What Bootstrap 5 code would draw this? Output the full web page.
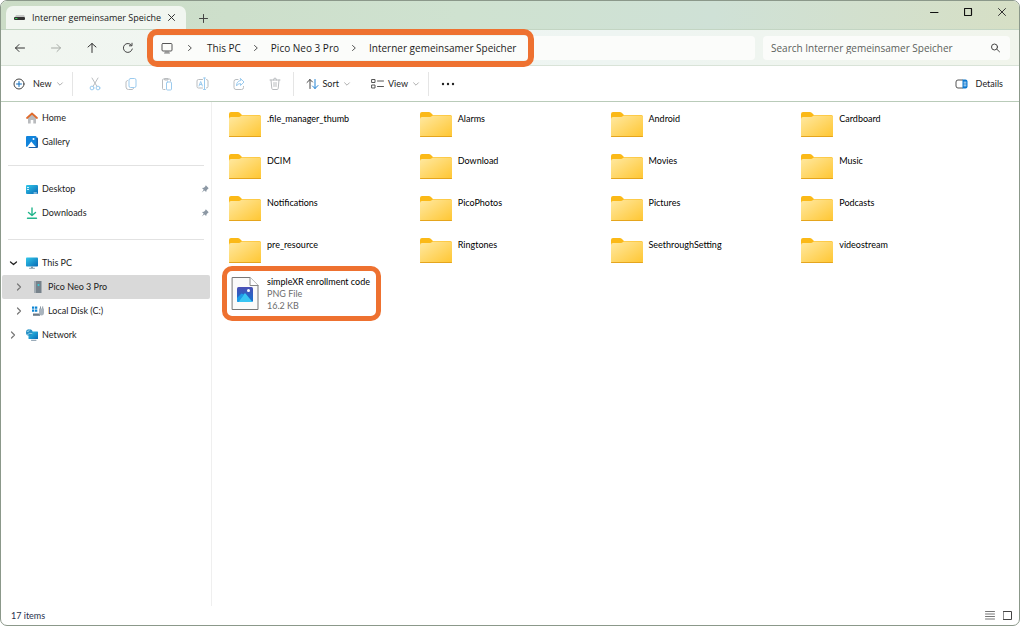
<!DOCTYPE html>
<html lang="en">
<head>
<meta charset="utf-8">
<meta name="viewport" content="width=device-width, initial-scale=1">
<title>Interner gemeinsamer Speicher</title>
<link href="https://cdn.jsdelivr.net/npm/bootstrap@5.3.0/dist/css/bootstrap.min.css" rel="stylesheet">
<style>
:root { --accent: #ee7130; --ink: #1b1b1b; --rule: #e5e5e5; }
body { font-family: Lato, "Open Sans", sans-serif; font-size: 9px; line-height: 12px; color: var(--ink); background: #fff; }
button, input { font: inherit; color: inherit; }
svg { display: block; flex: none; fill: none; stroke-linecap: round; stroke-linejoin: round; }
a { color: inherit; text-decoration: none; }
.plain { border: 0; background: none; padding: 0; display: flex; align-items: center; justify-content: center; }
.window { border: 1px solid #8b988a; border-radius: 7px; }
.titlebar { height: 28px; background: linear-gradient(90deg, #cbdcc6, #cfe2d0 45%, #cfe1d6 70%, #d6dfc5); }
.tab-page { width: 180px; margin: 5px 0 0 5px; padding: 0 10px 0 8px; background: #f1f6f0; border-radius: 7px 7px 0 0; }
.tab-title, .field-box { font-family: "Open Sans", "Noto Sans", sans-serif; }
.tab-title { margin-left: 6px; white-space: nowrap; }
.caption-btn { width: 34px; height: 22px; }
.navbar-row { height: 37px; padding: 0 9px 0 1px; background: linear-gradient(90deg, #f1f6f0, #eef5f2 60%, #f1f5ec); border-top: 1px solid #c3d5c3; border-bottom: 1px solid #d9e3d8; }
.nav-btn { width: 36px; height: 24px; }
.field-box { height: 24px; border-radius: 4px; background: #fbfcfa; font-size: 10px; }
.address { margin: 0 4px 0 7px; }
.search-box { width: 247px; }
.search-box input { border: 0; outline: 0; background: none; padding: 0; }
.search-box input::placeholder { color: #5c5f5c; opacity: 1; }
.crumbs { width: 375px; height: 24px; }
.marked { position: relative; }
.marked::after { content: ""; position: absolute; border: 6px solid var(--accent); border-radius: 10px; pointer-events: none; }
.crumbs::after { inset: -7px -6px; }
.toolbar { height: 36px; border-bottom: 1px solid #b9cbb9; }
.tool-icon { width: 36px; height: 24px; }
.split { width: 1px; height: 24px; background: var(--rule); }
.side { width: 211px; padding-top: 4px; border-right: 1px solid #efefef; }
.side-row { height: 24px; padding-left: 5px; margin: 0 1px; border-radius: 2px; display: flex; align-items: center; }
.side-row.nested { padding-left: 11px; }
.side-row.chosen { background: #d9d9d9; }
.side-row .twist { width: 12px; height: 12px; margin-right: 7px; }
.side-row svg.kind { margin-right: 4px; }
.side-line { height: 1px; margin: 11px 7px; background: #e2e2e2; }
.side-line.lower { margin-top: 14px; }
.tiles { display: grid; grid-template-columns: repeat(4, 1fr); grid-auto-rows: 42px; padding: 5px 27px 0 17px; color: #000; }
.tile { display: flex; align-items: flex-start; gap: 6px; white-space: nowrap; }
.tile > svg { margin-top: 5px; }
.tile > span { padding-top: 6px; }
.tile.picture > svg { margin-top: 2px; }
.tile.picture > span { padding-top: 1px; }
.tile.picture::after { top: -9px; left: -7px; width: 159px; height: 55px; border-width: 5px; }
.muted-line { color: #6d6d6d; }
.statusbar { height: 19px; padding: 0 7px 0 10px; color: #27314d; }
</style>
</head>
<body>
<svg width="0" height="0" class="position-absolute" aria-hidden="true">
  <defs>
    <linearGradient id="gFolder" x1="0" y1="0" x2="1" y2="1"><stop stop-color="#ffe9a2"/><stop offset="1" stop-color="#ffc631"/></linearGradient>
    <linearGradient id="gBlue" x1="0" y1="0" x2="1" y2="1"><stop stop-color="#31c8ea"/><stop offset="1" stop-color="#0869b5"/></linearGradient>
    <linearGradient id="gPic" x1="0" y1="0" x2="0" y2="1"><stop stop-color="#4b4fb5"/><stop offset="1" stop-color="#1272d0"/></linearGradient>
  </defs>
  <symbol id="folder" viewBox="0 0 32 26"><path d="M0 6V2Q0 0 2 0H9Q10.500 0 11.500 1.500L13 3H30Q32 3 32 5V10H0Z" fill="#fbb917"/><path d="M0 7Q0 5 2 5H10Q11 5 12 4L13 3.500H30Q32 3.500 32 5V23.500Q32 25 30.500 25H1.500Q0 25 0 23.500Z" fill="url(#gFolder)"/><path d="M.5 24.500H31.500" stroke="#e5a51d"/></symbol>
  <symbol id="right" viewBox="0 0 10 10"><path d="M3.500 2.500L6.300 5L3.500 7.500" stroke="#555"/></symbol>
  <symbol id="down" viewBox="0 0 10 10"><path d="M2 3.500L5 6.500L8 3.500" stroke="currentColor" stroke-width="1.200"/></symbol>
  <symbol id="pin" viewBox="0 0 8 8"><path d="M4.800 .3L7.700 3.200L6.700 4L5.500 5.400L5.200 7L3.400 5.500L.7 7.600L2.700 4.800L1 3L2.900 2.700L4.200 1.400Z" fill="#8c98a4"/></symbol>
</svg>

<div class="window d-flex flex-column min-vh-100 overflow-hidden">
  <header class="titlebar d-flex">
    <div class="tab-page d-flex align-items-center">
      <svg width="12" height="6" viewBox="0 0 12 6"><path d="M1 2L2 0H10L11 2Z" fill="#c6c8c6"/><rect x="0" y="2" width="11" height="3" rx="1" fill="#333"/><path d="M1.500 3.500H3" stroke="#39d353"/></svg>
      <span class="tab-title">Interner gemeinsamer Speiche</span>
      <button class="plain ms-auto" aria-label="Close tab"><svg width="9" height="9" viewBox="0 0 9 9"><path d="M1.500 1.500L7.500 7.500M7.500 1.500L1.500 7.500" stroke="#333"/></svg></button>
    </div>
    <button class="plain caption-btn mt-1 pt-1" aria-label="New tab"><svg width="9" height="9" viewBox="0 0 9 9"><path d="M4.500 .5V8.500M.5 4.500H8.500" stroke="#444"/></svg></button>
    <div class="d-flex ms-auto">
      <button class="plain caption-btn" aria-label="Minimize"><svg width="9" height="9" viewBox="0 0 9 9"><path d="M.5 4.500H8" stroke="#111"/></svg></button>
      <button class="plain caption-btn" aria-label="Maximize"><svg width="9" height="9" viewBox="0 0 9 9"><rect x=".5" y=".5" width="7" height="7" rx=".5" stroke="#111" stroke-width="1.200"/></svg></button>
      <button class="plain caption-btn" aria-label="Close"><svg width="9" height="9" viewBox="0 0 9 9"><path d="M.5 .5L7.500 7.500M7.500 .5L.5 7.500" stroke="#333"/></svg></button>
    </div>
  </header>

  <div class="navbar-row d-flex align-items-center">
    <button class="plain nav-btn" aria-label="Back"><svg width="12" height="12" viewBox="0 0 12 12"><path d="M10.500 6H1.500M5 2.500L1.500 6L5 9.500" stroke="#333"/></svg></button>
    <button class="plain nav-btn" aria-label="Forward"><svg width="12" height="12" viewBox="0 0 12 12"><path d="M1.500 6H10.500M7 2.500L10.500 6L7 9.500" stroke="#a5aaa5"/></svg></button>
    <button class="plain nav-btn" aria-label="Up"><svg width="12" height="12" viewBox="0 0 12 12"><path d="M6 10.500V1.500M2 5L6 1.500L10 5" stroke="#333"/></svg></button>
    <button class="plain nav-btn" aria-label="Refresh"><svg width="12" height="12" viewBox="0 0 12 12"><path d="M10.300 7A4.500 4.500 0 1 1 9.500 3.200M10 1.200V3.800H7.400" stroke="#444"/></svg></button>
    <div class="field-box address flex-grow-1">
      <nav class="crumbs marked d-flex align-items-center" aria-label="Address">
        <svg class="ms-2" width="12" height="12" viewBox="0 0 12 12"><rect x="1" y="1.500" width="10" height="7.500" rx="1" stroke="#555"/><path d="M3.500 11H8.500M5 9.500V10.500M7 9.500V10.500" stroke="#777"/></svg>
        <svg class="mx-2 ps-1" width="14" height="10"><use href="#right"/></svg>
        <a class="ms-1" href="#">This PC</a>
        <svg class="mx-2" width="14" height="10"><use href="#right"/></svg>
        <a href="#">Pico Neo 3 Pro</a>
        <svg class="mx-2" width="14" height="10"><use href="#right"/></svg>
        <a href="#">Interner gemeinsamer Speicher</a>
      </nav>
    </div>
    <div class="field-box search-box d-flex align-items-center ms-1">
      <input class="flex-grow-1 ms-2" type="text" aria-label="Search" placeholder="Search Interner gemeinsamer Speicher">
      <svg class="me-2" width="12" height="10" viewBox="0 0 12 10"><circle cx="4.500" cy="4" r="3" stroke="#444"/><path d="M6.800 6.200L9.500 8.800" stroke="#444"/></svg>
    </div>
  </div>

  <div class="toolbar d-flex align-items-center">
    <button class="plain ms-2 ps-1"><svg width="12" height="12" viewBox="0 0 12 12"><circle cx="6" cy="6" r="5" stroke="#444"/><path d="M6 3.500V8.500M3.500 6H8.500" stroke="#0f6cbd"/></svg><span class="mx-1 ps-1">New</span><svg width="8" height="8" color="#aaa"><use href="#down"/></svg></button>
    <span class="split ms-2 me-1"></span>
    <button class="plain tool-icon" aria-label="Cut" disabled><svg width="12" height="14" viewBox="0 0 12 14"><path d="M3 1L8 9.500M9 1L4 9.500" stroke="#b9bcbf"/><circle cx="3" cy="11" r="1.900" stroke="#9ccbee"/><circle cx="9" cy="11" r="1.900" stroke="#9ccbee"/></svg></button>
    <button class="plain tool-icon" aria-label="Copy" disabled><svg width="12" height="14" viewBox="0 0 12 14"><rect x="4" y="1.500" width="7" height="9" rx="1.500" stroke="#9ccbee"/><path d="M2.500 3.500Q1 4 1 5V10Q1 12.500 3.500 12.500H7Q8 12.500 8.500 11.500" stroke="#b9bcbf"/></svg></button>
    <button class="plain tool-icon" aria-label="Paste" disabled><svg width="12" height="14" viewBox="0 0 12 14"><path d="M4 12.500H2.500Q1.500 12.500 1.500 11.500V3Q1.500 2 2.500 2H8.500Q9.500 2 9.500 3V4" stroke="#b9bcbf"/><path d="M4 1.500H7V3H4Z" stroke="#b9bcbf"/><rect x="5.500" y="5" width="5" height="8" rx="1" stroke="#9ccbee"/></svg></button>
    <button class="plain tool-icon" aria-label="Rename" disabled><svg width="13" height="14" viewBox="0 0 13 14"><path d="M6.500 2.500H2.500Q1 2.500 1 4V9.500Q1 11 2.500 11H6.500M10.500 2.500Q12 2.500 12 4V9.500Q12 11 10.500 11" stroke="#b9bcbf"/><path d="M7.500 1H9.500M8.500 1V12.500M7.500 12.500H9.500M3 9L4.700 4.500L6.400 9M3.600 7.500H5.800" stroke="#9ccbee"/></svg></button>
    <button class="plain tool-icon" aria-label="Share" disabled><svg width="12" height="14" viewBox="0 0 12 14"><path d="M5 2.500H3Q1 2.500 1 4.500V10.500Q1 12.500 3 12.500H8.500Q10.500 12.500 10.500 10.500V9.500" stroke="#b9bcbf"/><path d="M7.500 1.500L11 5L7.500 8.500V6.500Q4.500 6.500 3.500 9Q3.500 4 7.500 3.500Z" stroke="#9ccbee"/></svg></button>
    <button class="plain tool-icon" aria-label="Delete" disabled><svg width="12" height="14" viewBox="0 0 12 14"><path d="M1 3H11M4.500 3Q4.500 1 6 1T7.500 3M2 3L2.800 11.500Q3 12.500 4 12.500H8Q9 12.500 9.200 11.500L10 3M5 5.500V9.500M7 5.500V9.500" stroke="#b9bcbf"/></svg></button>
    <span class="split"></span>
    <button class="plain ms-2 ps-1"><svg width="13" height="12" viewBox="0 0 13 12"><path d="M4 10.500V1.500M1 4.500L4 1.500L6.500 4" stroke="#444"/><path d="M9 1.500V10.500M6.500 8L9 10.500L12 7.500" stroke="#2082d4"/></svg><span class="mx-1">Sort</span><svg width="8" height="8" color="#aaa"><use href="#down"/></svg></button>
    <button class="plain ms-3 ps-1"><svg width="13" height="12" viewBox="0 0 13 12"><path d="M1 1.500H4V4.500H1ZM1 7H4V10H1ZM6.500 3H12.500M6.500 8.500H12.500" stroke="#555"/></svg><span class="mx-1">View</span><svg width="8" height="8" color="#aaa"><use href="#down"/></svg></button>
    <span class="split mx-2"></span>
    <button class="plain ms-1" aria-label="See more"><svg width="14" height="4" viewBox="0 0 14 4"><circle cx="2" cy="2" r="1.200" fill="#222"/><circle cx="7" cy="2" r="1.200" fill="#222"/><circle cx="12" cy="2" r="1.200" fill="#222"/></svg></button>
    <button class="plain ms-auto me-3"><svg width="13" height="10" viewBox="0 0 13 10"><path d="M7.500 9H3Q1 9 1 7V3Q1 1 3 1H7.500" stroke="#555"/><path d="M7.500 .5H10.500Q12.500 .5 12.500 2.500V7.500Q12.500 9.500 10.500 9.500H7.500Z" fill="#0b78d0"/><path d="M9 3.200H11M9 5H11M9 6.800H11" stroke="#fff" stroke-width=".8"/></svg><span class="ms-1 ps-1">Details</span></button>
  </div>

  <main class="d-flex flex-grow-1">
    <nav class="side flex-shrink-0" aria-label="Folders">
      <a class="side-row" href="#"><span class="twist"></span><svg class="kind" width="12" height="12" viewBox="0 0 12 12"><path d="M2 5.500L6 2L10 5.500V11.500H7.300V8H4.700V11.500H2Z" fill="#b9bbbe"/><path d="M1 6L6 1.500L11 6" stroke="#df6a2c" stroke-width="1.700"/></svg>Home</a>
      <a class="side-row" href="#"><span class="twist"></span><svg class="kind" width="12" height="12" viewBox="0 0 12 12"><rect x="2.500" y="1.500" width="9.500" height="10.500" rx="1" fill="#1b5fa8"/><rect width="10.500" height="11" rx="1" fill="#1184dc"/><path d="M1 11L5.300 5.500L9.800 11Z" fill="#fff"/><circle cx="7.500" cy="3" r="1" fill="#fff"/></svg>Gallery</a>
      <div class="side-line"></div>
      <a class="side-row" href="#"><span class="twist"></span><svg class="kind" width="12" height="9" viewBox="0 0 12 9"><rect width="12" height="9" rx="1" fill="url(#gBlue)"/><path d="M1.500 2.500H2.500M1.500 4.500H2.500M8 8H10.500" stroke="#fff" stroke-width=".9"/></svg>Desktop<svg class="ms-auto" width="10" height="8"><use href="#pin"/></svg></a>
      <a class="side-row" href="#"><span class="twist"></span><svg class="kind" width="12" height="12" viewBox="0 0 12 12"><path d="M6 1V8.500M2.500 5.500L6 8.500L9.500 5.500M1.500 11.300H10.500" stroke="#22b58c" stroke-width="1.400"/></svg>Downloads<svg class="ms-auto" width="10" height="8"><use href="#pin"/></svg></a>
      <div class="side-line lower"></div>
      <a class="side-row" href="#"><svg class="twist" viewBox="0 0 12 12"><path d="M3.500 5L6.500 7.500L9.500 5" stroke="#222" stroke-width="1.300"/></svg><svg class="kind" width="12" height="12" viewBox="0 0 12 12"><rect y=".5" width="12" height="9" rx=".8" fill="url(#gBlue)"/><path d="M5 9.500H7V11H5Z" fill="#7f96a7"/><path d="M3.500 11.300H8.500" stroke="#8aa0b0"/></svg>This PC</a>
      <a class="side-row nested chosen" href="#"><svg class="twist" viewBox="0 0 12 12"><path d="M4.500 3L7.500 6L4.500 9" stroke="#777" stroke-width="1.200"/></svg><svg class="kind" width="12" height="12" viewBox="0 0 12 12"><rect x="2.500" width="7" height="12" fill="#77828b"/><path d="M2.500 0H4V12H2.500Z" fill="#a2abb2"/><circle cx="6.500" cy="4" r="1" fill="#33d0e0"/></svg>Pico Neo 3 Pro</a>
      <a class="side-row nested" href="#"><svg class="twist" viewBox="0 0 12 12"><path d="M4.500 3L7.500 6L4.500 9" stroke="#777" stroke-width="1.200"/></svg><svg class="kind" width="12" height="11" viewBox="0 0 12 11"><path d="M0 .5H2.300V2.800H0ZM3 .5H5.300V2.800H3ZM0 3.500H2.300V5.800H0ZM3 3.500H5.300V5.800H3Z" fill="#0c85d4"/><path d="M1 7.500H8V9.800H1Z" fill="#6c7a86"/><path d="M7 2.500H12V6.500Q12 9.500 9.500 9.500T7 6.500Z" fill="#a9b4be"/><path d="M8.500 .8V2.500M10.700 .8V2.500" stroke="#8a98a3"/></svg>Local Disk (C:)</a>
      <a class="side-row" href="#"><svg class="twist" viewBox="0 0 12 12"><path d="M4.500 3L7.500 6L4.500 9" stroke="#777" stroke-width="1.200"/></svg><svg class="kind" width="12" height="12" viewBox="0 0 12 12"><rect x="2.500" y="2.500" width="9.500" height="7.500" rx=".6" fill="url(#gBlue)"/><path d="M5.500 11.300H10" stroke="#8297a8"/><circle cx="3.300" cy="3.500" r="3.300" fill="#2790c6"/><path d="M1.200 2.500Q3 3.500 3.500 .8M1.500 5.500Q3.500 3.500 6 4.500" stroke="#a8e0ef" stroke-width=".8"/></svg>Network</a>
    </nav>

    <section class="tiles flex-grow-1 align-content-start" aria-label="Items">
      <a class="tile" href="#"><svg width="32" height="26"><use href="#folder"/></svg><span>.file_manager_thumb</span></a>
      <a class="tile" href="#"><svg width="32" height="26"><use href="#folder"/></svg><span>Alarms</span></a>
      <a class="tile" href="#"><svg width="32" height="26"><use href="#folder"/></svg><span>Android</span></a>
      <a class="tile" href="#"><svg width="32" height="26"><use href="#folder"/></svg><span>Cardboard</span></a>
      <a class="tile" href="#"><svg width="32" height="26"><use href="#folder"/></svg><span>DCIM</span></a>
      <a class="tile" href="#"><svg width="32" height="26"><use href="#folder"/></svg><span>Download</span></a>
      <a class="tile" href="#"><svg width="32" height="26"><use href="#folder"/></svg><span>Movies</span></a>
      <a class="tile" href="#"><svg width="32" height="26"><use href="#folder"/></svg><span>Music</span></a>
      <a class="tile" href="#"><svg width="32" height="26"><use href="#folder"/></svg><span>Notifications</span></a>
      <a class="tile" href="#"><svg width="32" height="26"><use href="#folder"/></svg><span>PicoPhotos</span></a>
      <a class="tile" href="#"><svg width="32" height="26"><use href="#folder"/></svg><span>Pictures</span></a>
      <a class="tile" href="#"><svg width="32" height="26"><use href="#folder"/></svg><span>Podcasts</span></a>
      <a class="tile" href="#"><svg width="32" height="26"><use href="#folder"/></svg><span>pre_resource</span></a>
      <a class="tile" href="#"><svg width="32" height="26"><use href="#folder"/></svg><span>Ringtones</span></a>
      <a class="tile" href="#"><svg width="32" height="26"><use href="#folder"/></svg><span>SeethroughSetting</span></a>
      <a class="tile" href="#"><svg width="32" height="26"><use href="#folder"/></svg><span>videostream</span></a>
      <a class="tile picture marked" href="#">
        <svg width="32" height="34" viewBox="0 0 32 34"><path d="M3.500 .5H21L29 8.500V32.500H3.500Z" fill="#fafafa" stroke="#777"/><path d="M21 .5V8.500H29" fill="#fff" stroke="#888"/><rect x="8" y="10" width="16" height="15" rx="1.500" fill="url(#gPic)"/><path d="M9 25L15.500 16.500Q16 16 16.500 16.500L23.500 25Z" fill="#39c5f3"/><path d="M8 21L12.500 16.500L15 17.500L9.500 25Q8 25 8 23.500Z" fill="#1c9be8"/><circle cx="19.500" cy="13.500" r="1.500" fill="#fff"/></svg>
        <span>simpleXR enrollment code<br><span class="muted-line">PNG File<br>16.2 KB</span></span>
      </a>
    </section>
  </main>

  <footer class="statusbar d-flex align-items-center">
    <span>17 items</span>
    <button class="plain ms-auto" aria-label="Details view"><svg width="10" height="9" viewBox="0 0 10 9"><path d="M.5 .5H9.500M.5 3H9.500M.5 5.500H9.500M.5 8H9.500" stroke="#666" stroke-width=".9"/></svg></button>
    <button class="plain ms-2" aria-label="Tiles view"><svg width="9" height="9" viewBox="0 0 9 9"><rect x=".5" y=".5" width="8" height="8" stroke="#444"/></svg></button>
  </footer>
</div>
<script src="https://cdn.jsdelivr.net/npm/bootstrap@5.3.0/dist/js/bootstrap.bundle.min.js"></script>
</body>
</html>
